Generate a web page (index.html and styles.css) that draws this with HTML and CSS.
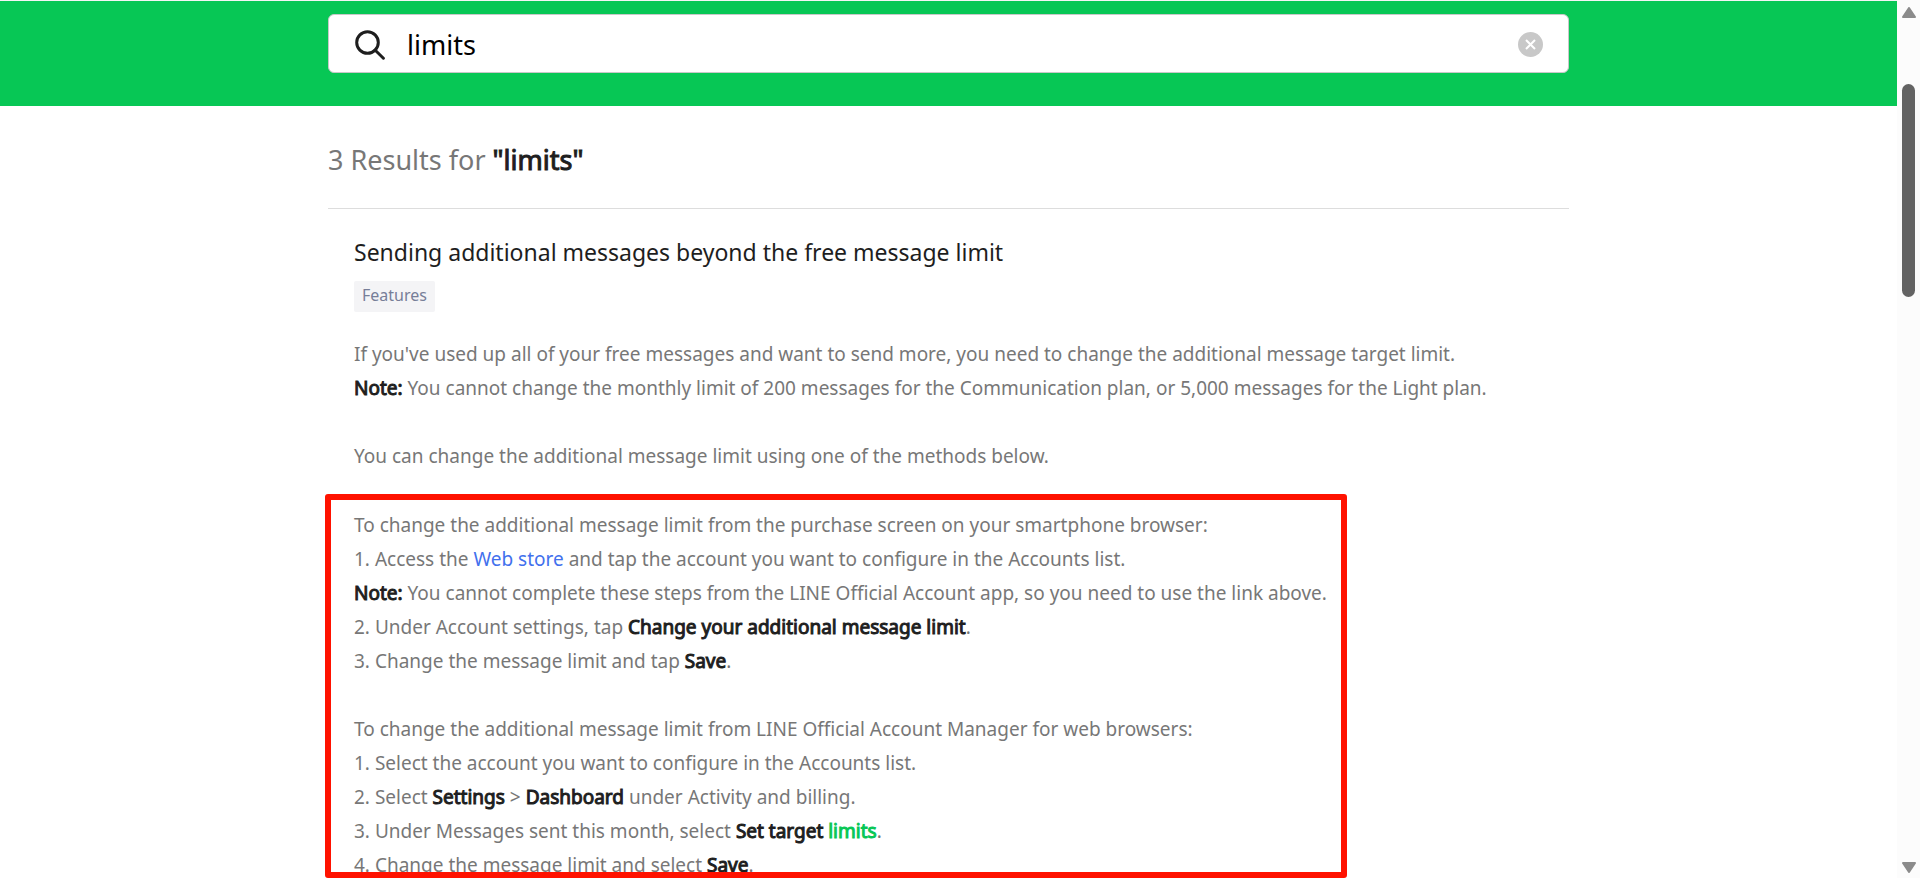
FILE: index.html
```html
<!DOCTYPE html>
<html lang="en">
<head>
    <meta charset="UTF-8">
    <meta name="viewport" content="width=device-width, initial-scale=1.0">
    <title>Search results</title>
    <link rel="stylesheet" href="styles.css">
</head>
<body>
    <div class="page">
        <header class="search-header">
            <form class="search-box container" role="search">
                <svg class="search-icon" viewBox="0 0 30 30" aria-hidden="true">
                    <circle cx="12.5" cy="12.5" r="10.8"/>
                    <path d="M20 20L28.4 28.2"/>
                </svg>
                <input type="text" class="search-input" aria-label="Search" value="limits">
                <button type="reset" class="clear-button" aria-label="Clear">
                    <svg viewBox="0 0 25 25" aria-hidden="true">
                        <path d="M8 8L17 17M17 8L8 17"/>
                    </svg>
                </button>
            </form>
        </header>

        <main class="results container">
            <h1 class="results-title">3 Results for <strong>"limits"</strong></h1>

            <article class="result">
                <h2 class="result-title">Sending additional messages beyond the free message limit</h2>
                <span class="tag">Features</span>

                <div class="result-text">
                    <p>If you've used up all of your free messages and want to send more, you need to change the additional message target limit.<br>
                    <strong>Note:</strong> You cannot change the monthly limit of 200 messages for the Communication plan, or 5,000 messages for the Light plan.</p>
                    <p>You can change the additional message limit using one of the methods below.</p>
                </div>

                <div class="result-text highlight-box">
                    <p>To change the additional message limit from the purchase screen on your smartphone browser:<br>
                    1. Access the <a href="#">Web store</a> and tap the account you want to configure in the Accounts list.<br>
                    <strong>Note:</strong> You cannot complete these steps from the LINE Official Account app, so you need to use the link above.<br>
                    2. Under Account settings, tap <strong>Change your additional message limit</strong>.<br>
                    3. Change the message limit and tap <strong>Save</strong>.</p>
                    <p>To change the additional message limit from LINE Official Account Manager for web browsers:<br>
                    1. Select the account you want to configure in the Accounts list.<br>
                    2. Select <strong>Settings</strong> &gt; <strong>Dashboard</strong> under Activity and billing.<br>
                    3. Under Messages sent this month, select <strong>Set target <mark>limits</mark></strong>.<br>
                    4. Change the message limit and select <strong>Save</strong>.</p>
                </div>
            </article>
        </main>
    </div>

    <div class="scrollbar" aria-hidden="true">
        <svg class="arrow" viewBox="0 0 14 11"><path d="M7 1L13 10H1Z"/></svg>
        <div class="track"><div class="thumb"></div></div>
        <svg class="arrow" viewBox="0 0 14 11"><path d="M1 1H13L7 10Z"/></svg>
    </div>
</body>
</html>
```

FILE: styles.css
```css
* {
    box-sizing: border-box;
}
body {
    display: flex;
    height: 100vh;
    margin: 0;
    overflow: hidden;
    font-family: "Noto Sans", sans-serif;
    color: #777;
    background-color: #fff;
}
.page {
    display: flex;
    flex: 1;
    flex-direction: column;
    min-width: 0;
}
.container {
    width: 100%;
    max-width: 1241px;
    margin: 0 auto;
}
h1, h2, p {
    margin: 0;
    font-weight: normal;
}
/* heavier strokes on the regular face */
strong {
    font-weight: normal;
    color: #1e1e1e;
    -webkit-text-stroke: 1px currentColor;
}

/* Search */
.search-header {
    padding: 13px 0 33px;
    border-top: 1px solid #f5f5f5;
    background-color: #07c755;
}
.search-box {
    display: flex;
    align-items: center;
    height: 59px;
    padding: 2px 25px 0 26px;
    border: 1px solid #c8c8c8;
    border-radius: 6px;
    background-color: #fff;
}
.search-icon {
    width: 30px;
    height: 30px;
    fill: none;
    stroke: #1e1e1e;
    stroke-width: 3;
    stroke-linecap: round;
}
.search-input {
    flex: 1;
    min-width: 0;
    margin-left: 22px;
    padding: 0;
    border: none;
    outline: none;
    font: 27px "Noto Sans", sans-serif;
    color: #000;
}
.clear-button {
    width: 25px;
    height: 25px;
    padding: 0;
    border: none;
    border-radius: 50%;
    background-color: #c8c8c8;
}
.clear-button svg {
    display: block;
    fill: none;
    stroke: #fff;
    stroke-width: 2;
}

/* Results */
.results {
    display: flex;
    flex: 1;
    flex-direction: column;
    min-height: 0;
}
.results-title {
    padding: 36px 0 30px;
    border-bottom: 1px solid #ddd;
    font-size: 27px;
    line-height: 36px;
}
.result {
    display: flex;
    flex: 1;
    flex-direction: column;
    align-items: flex-start;
    min-height: 0;
    padding: 27px 26px 0;
}
.result-title {
    font-size: 23px;
    line-height: 32px;
    color: #1e1e1e;
}
.tag {
    margin: 13px 0 25px;
    padding: 0 8px 2px;
    border-radius: 2px;
    background-color: #f4f4f6;
    font-size: 16px;
    line-height: 29px;
    color: #777e98;
}
.result-text {
    font-size: 19px;
    line-height: 34px;
}
.result-text p + p {
    margin-top: 34px;
}
.result-text a {
    color: #4270ed;
    text-decoration: none;
}
.result-text mark {
    color: #07c755;
    background: none;
}
.highlight-box {
    flex: 1;
    width: 100%;
    max-width: 1022px;
    min-height: 0;
    margin: 21px 0 0 -29px;
    padding: 8px 0 0 23px;
    border: 6px solid #ff1200;
    border-radius: 3px;
    overflow: hidden;
}

/* Scrollbar */
.scrollbar {
    display: flex;
    flex-direction: column;
    align-items: center;
    width: 23px;
    padding: 7px 0 5px;
    background-color: #fcfcfc;
}
.arrow {
    width: 14px;
    height: 11px;
    fill: #8b8b8b;
    stroke: #8b8b8b;
    stroke-width: 2;
    stroke-linejoin: round;
}
.track {
    flex: 1;
    padding: 66px 0;
}
.thumb {
    width: 13px;
    height: 213px;
    border-radius: 7px;
    background-color: #636363;
}
```
